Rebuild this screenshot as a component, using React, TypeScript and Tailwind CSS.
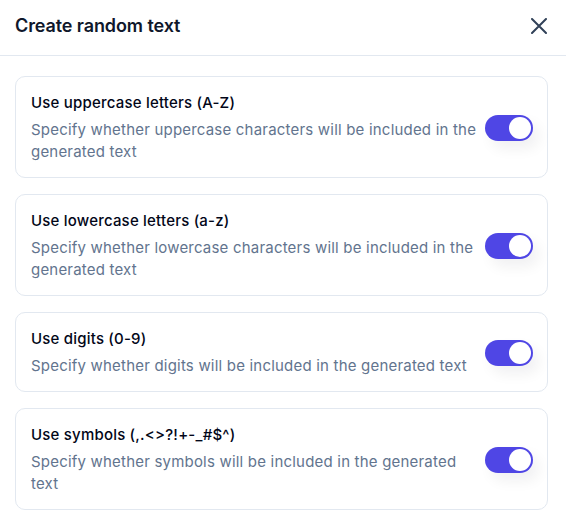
import React, { useState } from "react";

interface OptionItem {
  id: string;
  title: string;
  description: string;
}

const options: OptionItem[] = [
  {
    id: "uppercase",
    title: "Use uppercase letters (A-Z)",
    description: "Specify whether uppercase characters will be included in the generated text",
  },
  {
    id: "lowercase",
    title: "Use lowercase letters (a-z)",
    description: "Specify whether lowercase characters will be included in the generated text",
  },
  {
    id: "digits",
    title: "Use digits (0-9)",
    description: "Specify whether digits will be included in the generated text",
  },
  {
    id: "symbols",
    title: "Use symbols (,.<>?!+-_#$^)",
    description: "Specify whether symbols will be included in the generated text",
  },
];

function Toggle({ on, onChange }: { on: boolean; onChange: () => void }) {
  return (
    <button
      onClick={onChange}
      className={`shrink-0 w-[48px] h-[26px] rounded-full p-[2px] flex items-center transition-all shadow-[6px_8px_14px_rgba(15,23,42,0.06)] ${
        on ? "bg-[#4f46e5] justify-end" : "bg-slate-300 justify-start"
      }`}
    >
      <span className="block w-[22px] h-[22px] rounded-full bg-white" />
    </button>
  );
}

export default function App() {
  const [enabled, setEnabled] = useState<Record<string, boolean>>({
    uppercase: true,
    lowercase: true,
    digits: true,
    symbols: true,
  });

  return (
    <div className="w-[566px] h-[523px] bg-white font-['Inter',sans-serif] overflow-hidden">
      {/* Header */}
      <div className="h-[56px] pb-[4px] flex items-center justify-between pl-[15px] pr-[19px] border-b border-slate-200">
        <h1 className="text-[18px] font-semibold text-slate-900 tracking-[-0.1px]">Create random text</h1>
        <button className="text-slate-700">
          <svg width="16" height="16" viewBox="0 0 16 16" fill="none" stroke="currentColor" strokeWidth="2" strokeLinecap="round">
            <path d="M1 1L15 15M15 1L1 15" />
          </svg>
        </button>
      </div>

      {/* Options */}
      <div className="pl-[15px] pr-[18px] pt-[20px] flex flex-col gap-[16px]">
        {options.map((opt) => (
          <div key={opt.id} className="border border-slate-200 rounded-[10px] pl-[15px] pr-[14px] pt-[16px] pb-[14px] flex items-center gap-[8px]">
            <div className="flex-1 flex flex-col gap-[6px]">
              <div className="text-[15px] leading-[20px] font-medium text-slate-950 tracking-[0.2px]">{opt.title}</div>
              <div className="text-[15px] leading-[22px] text-slate-500 tracking-[0.2px]">{opt.description}</div>
            </div>
            <Toggle
              on={enabled[opt.id]}
              onChange={() => setEnabled({ ...enabled, [opt.id]: !enabled[opt.id] })}
            />
          </div>
        ))}
      </div>
    </div>
  );
}
